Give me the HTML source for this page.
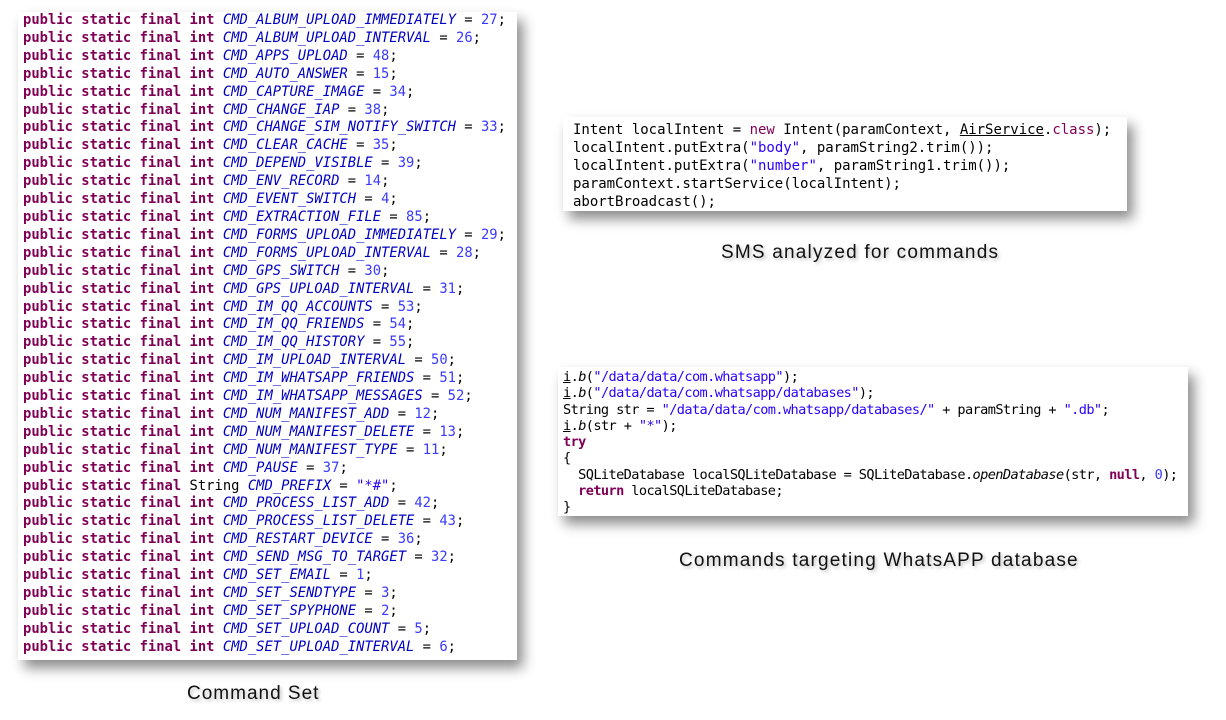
<!DOCTYPE html>
<html><head><meta charset="utf-8"><style>
body{margin:0;width:1226px;height:720px;background:#fff;position:relative;overflow:hidden}
.box{position:absolute;background:#fff;box-shadow:6px 8px 12px rgba(0,0,0,0.45);}
.code{font-family:"DejaVu Sans Mono","Liberation Mono",monospace;white-space:pre;color:#000;}
.k{color:#7f0055;font-weight:bold}
.c{color:#0000c0;font-style:italic}
.n{color:#3a3aff}
.s{color:#2a00ff}
.cap{position:absolute;font-family:"Liberation Sans","DejaVu Sans",sans-serif;font-size:19px;letter-spacing:1.2px;color:#111;text-shadow:2px 2px 3px rgba(0,0,0,0.25);white-space:nowrap}
</style></head><body>
<div class="box" style="left:18px;top:12px;width:499px;height:648px"></div>
<div class="code" id="left" style="position:absolute;left:23px;top:12px;font-size:13.8px;line-height:17.91px;letter-spacing:0.02px"></div>

<div class="box" style="left:563px;top:117px;width:564px;height:94px"></div>
<div class="code" style="position:absolute;left:573px;top:121px;font-size:14px;line-height:18px;letter-spacing:-0.02px">Intent localIntent = <span class="k" style="font-weight:normal">new</span> Intent(paramContext, <u>AirService</u>.<span class="k" style="font-weight:normal">class</span>);
localIntent.putExtra(<span class="s">"body"</span>, paramString2.trim());
localIntent.putExtra(<span class="s">"number"</span>, paramString1.trim());
paramContext.startService(localIntent);
abortBroadcast();</div>

<div class="box" style="left:558px;top:367px;width:630px;height:149px"></div>
<div class="code" style="position:absolute;left:563px;top:369px;font-size:13.6px;line-height:16.25px;letter-spacing:-0.6px"><u>i</u>.<i>b</i>(<span class="s">"/data/data/com.whatsapp"</span>);
<u>i</u>.<i>b</i>(<span class="s">"/data/data/com.whatsapp/databases"</span>);
String str = <span class="s">"/data/data/com.whatsapp/databases/"</span> + paramString + <span class="s">".db"</span>;
<u>i</u>.<i>b</i>(str + <span class="s">"*"</span>);
<span class="k">try</span>
{
  SQLiteDatabase localSQLiteDatabase = SQLiteDatabase.<i>openDatabase</i>(str, <span class="k">null</span>, <span class="n">0</span>);
  <span class="k">return</span> localSQLiteDatabase;
}</div>

<div class="cap" style="left:721px;top:242px">SMS analyzed for commands</div>
<div class="cap" style="left:679px;top:550px">Commands targeting WhatsAPP database</div>
<div class="cap" style="left:187px;top:683px;letter-spacing:1px">Command Set</div>

<script>
var d=[["ALBUM_UPLOAD_IMMEDIATELY",27],["ALBUM_UPLOAD_INTERVAL",26],["APPS_UPLOAD",48],["AUTO_ANSWER",15],["CAPTURE_IMAGE",34],["CHANGE_IAP",38],["CHANGE_SIM_NOTIFY_SWITCH",33],["CLEAR_CACHE",35],["DEPEND_VISIBLE",39],["ENV_RECORD",14],["EVENT_SWITCH",4],["EXTRACTION_FILE",85],["FORMS_UPLOAD_IMMEDIATELY",29],["FORMS_UPLOAD_INTERVAL",28],["GPS_SWITCH",30],["GPS_UPLOAD_INTERVAL",31],["IM_QQ_ACCOUNTS",53],["IM_QQ_FRIENDS",54],["IM_QQ_HISTORY",55],["IM_UPLOAD_INTERVAL",50],["IM_WHATSAPP_FRIENDS",51],["IM_WHATSAPP_MESSAGES",52],["NUM_MANIFEST_ADD",12],["NUM_MANIFEST_DELETE",13],["NUM_MANIFEST_TYPE",11],["PAUSE",37],["PREFIX",null],["PROCESS_LIST_ADD",42],["PROCESS_LIST_DELETE",43],["RESTART_DEVICE",36],["SEND_MSG_TO_TARGET",32],["SET_EMAIL",1],["SET_SENDTYPE",3],["SET_SPYPHONE",2],["SET_UPLOAD_COUNT",5],["SET_UPLOAD_INTERVAL",6]];
var h="";
d.forEach(function(x){
 if(x[1]===null) h+='<span class="k">public static final</span> String <span class="c">CMD_PREFIX</span> = <span class="s">"*#"</span>;\n';
 else h+='<span class="k">public static final int</span> <span class="c">CMD_'+x[0]+'</span> = <span class="n">'+x[1]+'</span>;\n';
});
document.getElementById("left").innerHTML=h;
</script>
</body></html>
